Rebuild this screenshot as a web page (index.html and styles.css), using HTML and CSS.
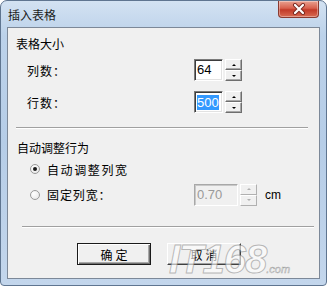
FILE: index.html
```html
<!DOCTYPE html>
<html lang="zh">
<head>
<meta charset="utf-8">
<link rel="stylesheet" href="styles.css">
</head>
<body>
<div class="window">
  <div class="titlebar">
    <span class="title">插入表格</span>
    <span class="close">
      <svg width="16" height="12" viewBox="0 0 16 12">
        <path d="M4 2 L12 10 M12 2 L4 10" stroke="#7a2a22" stroke-width="4" stroke-linecap="round"/>
        <path d="M4 2 L12 10 M12 2 L4 10" stroke="#ffffff" stroke-width="2.2" stroke-linecap="round"/>
      </svg>
    </span>
  </div>
  <div class="client">
    <div class="heading h-size">表格大小</div>
    <div class="field-row row-cols">
      <span class="label">列数：</span>
      <div class="spin">
        <span class="edit">64</span>
        <span class="arrows"><span class="arrow"><i class="tri up"></i></span><span class="arrow"><i class="tri down"></i></span></span>
      </div>
    </div>
    <div class="field-row row-rows">
      <span class="label">行数：</span>
      <div class="spin">
        <span class="edit"><span class="sel">500</span></span>
        <span class="arrows"><span class="arrow"><i class="tri up"></i></span><span class="arrow"><i class="tri down"></i></span></span>
      </div>
    </div>
    <div class="sep sep-1"></div>
    <div class="heading h-auto">自动调整行为</div>
    <div class="radio-row row-auto">
      <span class="radio checked"></span>
      <span class="radio-text spaced">自动调整列宽</span>
    </div>
    <div class="radio-row row-fixed">
      <span class="radio"></span>
      <span class="radio-text fixed-text">固定列宽：</span>
      <div class="spin disabled">
        <span class="edit wide">0.70</span>
        <span class="arrows"><span class="arrow"><i class="tri up"></i></span><span class="arrow"><i class="tri down"></i></span></span>
      </div>
      <span class="unit">cm</span>
    </div>
    <div class="sep sep-2"></div>
    <div class="buttons">
      <span class="btn default">确定</span>
      <span class="btn">取消</span>
    </div>
  </div>
  <div class="watermark">IT168<span class="dotcom">.com</span></div>
</div>
</body>
</html>
```
FILE: styles.css
```css
html, body {
  margin: 0;
  padding: 0;
  background: #ffffff;
}
body {
  width: 327px;
  height: 286px;
  overflow: hidden;
  font-family: "Noto Sans CJK SC", "Liberation Sans", sans-serif;
  font-size: 12px;
  color: #000;
}
.window {
  position: relative;
  box-sizing: border-box;
  width: 327px;
  height: 286px;
  border: 1px solid #5f7590;
  border-radius: 7px 7px 4px 4px;
  background: linear-gradient(180deg, #d3e2f2 0%, #bcd2ea 12%, #b6cde7 50%, #c3d6ec 100%);
  display: flex;
  flex-direction: column;
  overflow: hidden;
}
.titlebar {
  height: 26px;
  display: flex;
  align-items: flex-start;
  padding-left: 7px;
  padding-right: 7px;
}
.title {
  margin-top: 6px;
  font-size: 12px;
  line-height: 16px;
  color: #1b1b1b;
}
.close {
  margin-left: auto;
  width: 41px;
  height: 17px;
  box-sizing: border-box;
  border: 1px solid #8a3a30;
  border-top: none;
  border-radius: 0 0 4px 4px;
  background: linear-gradient(180deg, #e9a191 0%, #d8604d 45%, #c23a28 55%, #d86a52 100%);
  display: flex;
  align-items: center;
  justify-content: center;
  box-shadow: inset 0 0 0 1px rgba(255,255,255,0.35);
}
.close svg { display: block; }
.client {
  margin: 0 6px 0 6px;
  box-sizing: border-box;
  height: 252px;
  border: 1px solid #7c8898;
  background: #f0f0f0;
  display: flex;
  flex-direction: column;
}
.heading {
  height: 16px;
  line-height: 16px;
}
.h-size { margin-top: 8px; padding-left: 8px; }
.h-auto { margin-top: 11px; padding-left: 9px; }
.field-row {
  display: flex;
  align-items: center;
  height: 22px;
  padding-left: 19px;
}
.row-cols { margin-top: 7px; }
.row-rows { margin-top: 10px; }
.label {
  width: 167px;
  letter-spacing: 1px;
}
.spin {
  display: flex;
  align-items: stretch;
  height: 22px;
}
.edit {
  box-sizing: border-box;
  width: 29px;
  height: 22px;
  background: #ffffff;
  border-top: 1px solid #7a7a7a;
  border-left: 1px solid #7a7a7a;
  border-right: 1px solid #ffffff;
  border-bottom: 1px solid #ffffff;
  box-shadow: inset 1px 1px 0 #3c3c3c, inset -1px -1px 0 #e2e2e2;
  font-family: "Liberation Sans", sans-serif;
  font-size: 13px;
  line-height: 18px;
  padding-left: 2px;
  display: flex;
  align-items: center;
}
.edit.wide { width: 44px; }
.sel {
  background: #3399ff;
  color: #ffffff;
  line-height: 15px;
}
.arrows {
  display: flex;
  flex-direction: column;
  justify-content: space-between;
  margin-left: 2px;
  width: 17px;
}
.arrow {
  box-sizing: border-box;
  height: 11px;
  background: #f0f0f0;
  border-top: 1px solid #ffffff;
  border-left: 1px solid #ffffff;
  border-right: 1px solid #6e6e6e;
  border-bottom: 1px solid #6e6e6e;
  box-shadow: inset -1px -1px 0 #a8a8a8;
  display: flex;
  align-items: center;
  justify-content: center;
}
.tri {
  display: block;
  width: 0;
  height: 0;
  border-left: 2px solid transparent;
  border-right: 2px solid transparent;
}
.tri.up { border-bottom: 2px solid #000; }
.tri.down { border-top: 2px solid #000; }
.disabled .edit {
  background: #f0f0f0;
  color: #9a9a9a;
  border-top-color: #a8a8a8;
  border-left-color: #a8a8a8;
  box-shadow: inset 1px 1px 0 #c8c8c8;
}
.disabled .arrow {
  border-right-color: #b0b0b0;
  border-bottom-color: #b0b0b0;
  box-shadow: none;
}
.disabled .tri.up { border-bottom-color: #b0b0b0; }
.disabled .tri.down { border-top-color: #b0b0b0; }
.sep {
  height: 0;
  border-top: 1px solid #a0a0a0;
  border-bottom: 1px solid #ffffff;
}
.sep-1 { margin: 14px 11px 0 8px; }
.sep-2 { margin: 21px 5px 0 14px; }
.radio-row {
  display: flex;
  align-items: center;
  padding-left: 22px;
}
.row-auto { margin-top: 5px; height: 16px; }
.row-fixed { margin-top: 7px; height: 21px; }
.radio {
  box-sizing: border-box;
  width: 10px;
  height: 10px;
  border-radius: 50%;
  border: 1px solid #9a9a9a;
  background: radial-gradient(circle at 35% 35%, #ffffff 0%, #e4e4e4 100%);
  position: relative;
  flex: none;
}
.radio.checked::after {
  content: "";
  position: absolute;
  left: 2px;
  top: 2px;
  width: 4px;
  height: 4px;
  border-radius: 50%;
  background: #1a1a1a;
}
.radio-text {
  margin-left: 7px;
}
.spaced { letter-spacing: 1.6px; }
.fixed-text {
  width: 147px;
  letter-spacing: 0.9px;
}
.unit {
  margin-left: 8px;
  font-family: "Liberation Sans", sans-serif;
  font-size: 12px;
}
.buttons {
  display: flex;
  gap: 16px;
  margin-top: 15px;
  padding-left: 69px;
}
.btn {
  box-sizing: border-box;
  width: 74px;
  height: 22px;
  display: flex;
  align-items: center;
  justify-content: center;
  background: #f0f0f0;
  border-top: 1px solid #ffffff;
  border-left: 1px solid #ffffff;
  border-right: 1px solid #404040;
  border-bottom: 1px solid #404040;
  box-shadow: inset -1px -1px 0 #a0a0a0;
  letter-spacing: 3px;
  padding-left: 3px;
}
.btn.default {
  border: 1px solid #1a1a1a;
  box-shadow: inset 1px 1px 0 #ffffff, inset -1px -1px 0 #707070, inset -2px -2px 0 #a8a8a8;
}
.watermark {
  position: absolute;
  left: 168px;
  top: 240px;
  font-family: "Liberation Sans", sans-serif;
  font-style: italic;
  font-weight: bold;
  font-size: 40px;
  line-height: 36px;
  letter-spacing: -1px;
  color: rgba(255, 255, 255, 0.6);
  -webkit-text-stroke: 1px rgba(120, 120, 120, 0.5);
  pointer-events: none;
}
.dotcom {
  font-size: 11px;
  letter-spacing: 0;
  -webkit-text-stroke: 0.5px rgba(120, 120, 120, 0.7);
  font-weight: normal;
}
```
